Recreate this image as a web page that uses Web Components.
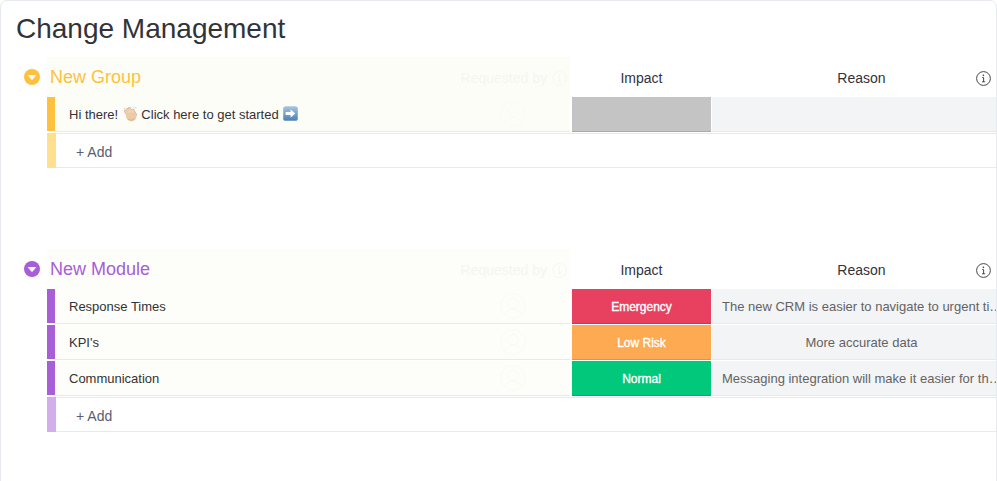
<!DOCTYPE html>
<html lang="en">
<head>
<meta charset="utf-8">
<title>Change Management</title>
<style>
html,body{margin:0;height:100%;overflow:hidden;background:#fff}
body{font-family:"Liberation Sans",Arial,sans-serif;color:#323338}
</style>
</head>
<body>
<board-app>
  <span slot="title">Change Management</span>
  <board-group label="New Group" color="#fdc13e" light="#ffe08f" band="#fdfdf8">
    <task-row status="#c4c4c4">Hi there! <hand-emoji></hand-emoji> Click here to get started <arrow-emoji></arrow-emoji></task-row>
  </board-group>
  <board-group label="New Module" color="#a75ed6" light="#d4aeea" band="#fdfdf9">
    <task-row status="#e7415f" status-text="Emergency" reason="The new CRM is easier to navigate to urgent tickets and respond faster">Response Times</task-row>
    <task-row status="#fdaa52" status-text="Low Risk" reason="More accurate data" centered>KPI's</task-row>
    <task-row status="#01c87a" status-text="Normal" reason="Messaging integration will make it easier for the team to communicate">Communication</task-row>
  </board-group>
</board-app>
<script>
function define(name, css, html, setup){
  customElements.define(name, class extends HTMLElement{
    connectedCallback(){
      if(this.shadowRoot) return;
      const root=this.attachShadow({mode:"open"});
      const attrs=n=>this.getAttribute(n)||"";
      root.innerHTML="<style>"+css+"</style>"+(typeof html==="function"?html(attrs,this):html);
      if(setup) setup(this,root);
    }
  });
}

define("info-icon",":host{display:inline-flex;width:15px;height:15px;color:inherit}svg{display:block}",
`<svg width="15" height="15" viewBox="0 0 15 15" fill="none" stroke="currentColor" aria-hidden="true">
  <circle cx="7.5" cy="7.5" r="6.9" stroke-width=".9"/>
  <path d="M6.300 6.500h1.300v4.200M6 10.800h3.100" stroke-width=".9"/>
  <circle cx="7.400" cy="4.300" r=".8" fill="currentColor" stroke="none"/>
</svg>`);

define("user-icon",":host{display:inline-flex;width:26px;height:26px}svg{display:block}",
`<svg width="26" height="26" viewBox="0 0 26 26" fill="none" stroke="#fafaf5" stroke-width="1" aria-hidden="true">
  <circle cx="13" cy="13" r="12.3"/>
  <circle cx="13" cy="10.5" r="5.2"/>
  <path d="M4.600 22c1-3.600 3.800-5.600 8.400-5.600s7.400 2 8.400 5.600"/>
</svg>`);

define("group-arrow",":host{display:inline-flex;width:16px;height:16px}svg{display:block}",
a=>`<svg width="16" height="16" viewBox="0 0 16 16" aria-hidden="true">
  <circle cx="8" cy="8" r="8" fill="${a("color")}"/>
  <path d="M4.400 6.500h7.200L8 10.600z" fill="#fff" stroke="#fff" stroke-width="1" stroke-linejoin="round"/>
</svg>`);

define("hand-emoji",":host{display:inline-block;width:15px;height:16px;vertical-align:-3px;margin:0 0 0 1px}svg{display:block}",
`<svg width="15" height="16" viewBox="0 0 15 16" role="img" aria-label="waving hand">
  <g fill="none" stroke-linecap="round">
    <g stroke="#c9a283" stroke-width="3">
      <path d="M2.600 5.300 6 10M4.300 3.700 8 9M6.400 2.600 9.800 7.800M9.800 4.200l2.600 4.600"/>
    </g>
    <g stroke="#f0d2b4" stroke-width="2.200">
      <path d="M2.600 5.300 6 10M4.300 3.700 8 9M6.400 2.600 9.800 7.800M9.800 4.200l2.600 4.600"/>
    </g>
  </g>
  <path d="M2.900 7.200C2.400 10 3.400 13 5.300 14.300c2.300 1.500 5.300 1.100 7-.9 1.200-1.500 1.500-3.300.8-5L11 6.700 7 6.400 5 7.600z" fill="#edcaa8"/>
  <path d="M5 13.300c2 1.300 4.600 1.100 6.300-.5" stroke="#d8ae88" stroke-width=".8" fill="none" stroke-linecap="round"/>
  <path d="M.9 3.400 1.900 1.800M10.600 1.200l1.400 1.400M12.300 .8l1 1" stroke="#c2d2dc" stroke-width=".8" fill="none" stroke-linecap="round"/>
</svg>`);

define("arrow-emoji",":host{display:inline-block;width:15px;height:15px;vertical-align:-2px;margin-left:1px}svg{display:block}",
`<svg width="15" height="15" viewBox="0 0 15 15" role="img" aria-label="right arrow">
  <defs><linearGradient id="g" x1="0" y1="0" x2="0" y2="1"><stop offset="0" stop-color="#a9c6e0"/><stop offset="1" stop-color="#4a81b4"/></linearGradient></defs>
  <rect x=".2" y=".2" width="14.600" height="14.600" rx="2.600" fill="url(#g)"/>
  <path d="M2.600 6h5V3.400l4.800 4.100-4.800 4.100V9h-5z" fill="#fff"/>
</svg>`);

define("board-app",`
  :host{display:flex;flex-direction:column;box-sizing:border-box;width:997px;height:calc(100vh + 12px);
    border:1px solid #e6e9ef;border-radius:7px;overflow:hidden;background:#fff;color:#323338}
  h1{margin:0;height:56px;padding-left:15px;display:flex;align-items:center;font:400 28px/1 "Liberation Sans",Arial,sans-serif;color:#323338;flex:none}
  .groups{display:flex;flex-direction:column;gap:81px}
`,`<h1><slot name="title"></slot></h1><div class="groups"><slot></slot></div>`);

define("board-group",`
  :host{display:block;width:1100px;--add-color:#5b5d73}
  header{display:flex;height:40px;padding-left:23px}
  group-arrow{align-self:center;margin-right:7px;flex:none}
  .band{flex:0 0 520px;padding-left:3px;display:flex;align-items:center;justify-content:space-between;
    font-size:18px;color:var(--color)}
  .req{display:flex;align-items:center;gap:5px;font-size:14px;color:#f5f5f0;padding-right:3px;padding-top:2px}
  .col{flex:none;display:flex;align-items:center;justify-content:center;font-size:14px;color:#323338;padding-top:2px;box-sizing:border-box;position:relative}
  .impact{width:139px;margin-left:2px}
  .reason{width:299px;margin-left:1px}
  .reason info-icon{position:absolute;left:264px;top:14px;color:#333}
  .rows{padding-left:46px}
  .add{display:flex;height:35px;margin-left:0}
  .add i{flex:0 0 9px;background:var(--light)}
  .add div{flex:1;box-sizing:border-box;border-top:1px solid #e6e9ef;border-bottom:1px solid #e6e9ef;
    padding:2px 0 0 20px;display:flex;align-items:center;font-size:14px;color:var(--add-color)}
`,(a)=>`<style>:host{--color:${a("color")};--light:${a("light")};--band:${a("band")}}</style>
<header>
  <group-arrow color="${a("color")}"></group-arrow>
  <div class="band" style="background:${a("band")}"><span>${a("label")}</span><span class="req">Requested by <info-icon></info-icon></span></div>
  <div class="col impact">Impact</div>
  <div class="col reason">Reason<info-icon></info-icon></div>
</header>
<div class="rows"><slot></slot><div class="add"><i></i><div>+ Add</div></div></div>`);

define("task-row",`
  :host{display:flex;height:36px;font-size:13px;color:#323338}
  .bar{flex:0 0 8px;height:34px;background:var(--color)}
  .name{flex:0 0 515px;box-sizing:border-box;height:35px;padding:0 44px 0 14px;background:var(--band);border-bottom:1px solid #e6e9ef;
    display:flex;align-items:center;justify-content:space-between;white-space:pre}
  .label{display:block}
  .status{flex:0 0 139px;box-sizing:border-box;height:35px;margin-left:2px;padding-top:2px;border-bottom:1px solid rgba(0,0,0,.13);
    display:flex;align-items:center;justify-content:center;color:#fff;font-size:12px;-webkit-text-stroke:.35px #fff}
  .reason{flex:0 0 299px;box-sizing:border-box;height:35px;margin-left:1px;background:#f3f4f6;border-bottom:1px solid #e6e9ef;
    padding:0 4px 0 10px;line-height:35px;color:#636363;white-space:nowrap;overflow:hidden;text-overflow:ellipsis}
  .c{text-align:center;padding-right:10px}
`,(a,el)=>`<div class="bar"></div>
<div class="name"><span class="label"><slot></slot></span><user-icon></user-icon></div>
<div class="status" style="background:${a("status")}">${a("status-text")}</div>
<div class="reason${el.hasAttribute("centered")?" c":""}">${a("reason")}</div>`);
</script>
</body>
</html>
